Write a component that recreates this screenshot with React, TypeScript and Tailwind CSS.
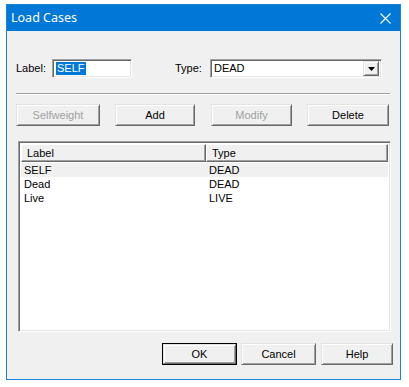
import React from 'react';

const font = { fontFamily: '"Liberation Sans", Arial, sans-serif' };

const raised =
  'border border-t-[#e3e3e3] border-l-[#e3e3e3] border-b-[#696969] border-r-[#696969] shadow-[inset_1px_1px_0_#ffffff,inset_-1px_-1px_0_#a0a0a0] bg-[#f0f0f0]';
const sunken =
  'border border-t-[#a0a0a0] border-l-[#a0a0a0] border-b-[#ffffff] border-r-[#ffffff] shadow-[inset_1px_1px_0_#696969,inset_-1px_-1px_0_#e3e3e3] bg-white';

const Btn: React.FC<{ label: string; w: string; disabled?: boolean; def?: boolean }> = ({ label, w, disabled, def }) => {
  if (def) {
    return (
      <div className={`${w} h-[22px] border border-black flex`}>
        <div className={`flex-1 ${raised} flex items-center justify-center text-[11px] text-black`}>{label}</div>
      </div>
    );
  }
  return (
    <div
      className={`${w} h-[22px] ${raised} flex items-center justify-center text-[11px] ${
        disabled ? 'text-[#a0a0a0]' : 'text-black'
      }`}
    >
      {label}
    </div>
  );
};

const rows = [
  { label: 'SELF', type: 'DEAD', sel: true },
  { label: 'Dead', type: 'DEAD' },
  { label: 'Live', type: 'LIVE' },
];

export default function App() {
  return (
    <div className="w-[409px] h-[387px] bg-white pt-[4px] pl-[6px]" style={font}>
      <div className="w-[395px] h-[376px] border border-[#1883d7] flex flex-col">
        {/* title bar */}
        <div className="h-[26px] bg-[#0078d7] flex items-center justify-between pl-[4px] pr-[9px]">
          <span className="text-white text-[12.5px]" style={{ fontFamily: '"Noto Sans", "Open Sans", sans-serif' }}>
            Load Cases
          </span>
          <svg width="11" height="11" viewBox="0 0 11 11">
            <path d="M0.5 0.5 L10.5 10.5 M10.5 0.5 L0.5 10.5" stroke="#ffffff" strokeWidth="1.1" />
          </svg>
        </div>

        {/* body */}
        <div className="flex-1 bg-[#f0f0f0] flex flex-col">
          {/* label / type row */}
          <div className="flex items-center mt-[28px] h-[19px] text-[11px] text-black">
            <span className="ml-[9px] w-[36px]">Label:</span>
            <div className={`w-[80px] h-[19px] ${sunken} flex items-center px-[3px]`}>
              <span className="bg-[#0078d7] text-white px-[1px] leading-[13px]">SELF</span>
            </div>
            <span className="ml-[43px] w-[35px]">Type:</span>
            <div className={`w-[172px] h-[19px] ${sunken} flex items-center pl-[3px] pr-[2px]`}>
              <span className="flex-1">DEAD</span>
              <div className={`w-[16px] h-[15px] ${raised} flex items-center justify-center`}>
                <svg width="7" height="4" viewBox="0 0 7 4">
                  <path d="M0 0 H7 L3.5 4 Z" fill="#000" />
                </svg>
              </div>
            </div>
          </div>

          {/* separator */}
          <div className="ml-[9px] w-[374px] mt-[15px] border-t border-t-[#a0a0a0] border-b border-b-white" />

          {/* action buttons */}
          <div className="flex mt-[9px] ml-[9px]">
            <Btn label="Selfweight" w="w-[84px]" disabled />
            <div className="ml-[15px]">
              <Btn label="Add" w="w-[80px]" />
            </div>
            <div className="ml-[16px]">
              <Btn label="Modify" w="w-[81px]" disabled />
            </div>
            <div className="ml-[15px]">
              <Btn label="Delete" w="w-[82px]" />
            </div>
          </div>

          {/* list */}
          <div className={`ml-[11px] w-[373px] h-[191px] mt-[15px] ${sunken} p-[2px] flex flex-col text-[11px] text-black`}>
            <div className="flex h-[18px]">
              <div className="w-[185px] h-[18px] border border-t-white border-l-white border-b-[#696969] border-r-[#696969] shadow-[inset_-1px_-1px_0_#a0a0a0] bg-[#f0f0f0] flex items-center pl-[5px]">
                Label
              </div>
              <div className="flex-1 h-[18px] border border-t-white border-l-white border-b-[#696969] border-r-[#696969] shadow-[inset_-1px_-1px_0_#a0a0a0] bg-[#f0f0f0] flex items-center pl-[5px]">
                Type
              </div>
            </div>
            <div className="flex flex-col mt-[1px]">
              {rows.map((r) => (
                <div key={r.label} className={`flex h-[14px] items-center ${r.sel ? 'bg-[#f0f0f0]' : ''}`}>
                  <span className="w-[188px] pl-[3px]">{r.label}</span>
                  <span>{r.type}</span>
                </div>
              ))}
            </div>
          </div>

          {/* dialog buttons */}
          <div className="flex mt-[11px] ml-[155px]">
            <Btn label="OK" w="w-[75px]" def />
            <div className="ml-[4px]">
              <Btn label="Cancel" w="w-[75px]" />
            </div>
            <div className="ml-[5px]">
              <Btn label="Help" w="w-[72px]" />
            </div>
          </div>
        </div>
      </div>
    </div>
  );
}
